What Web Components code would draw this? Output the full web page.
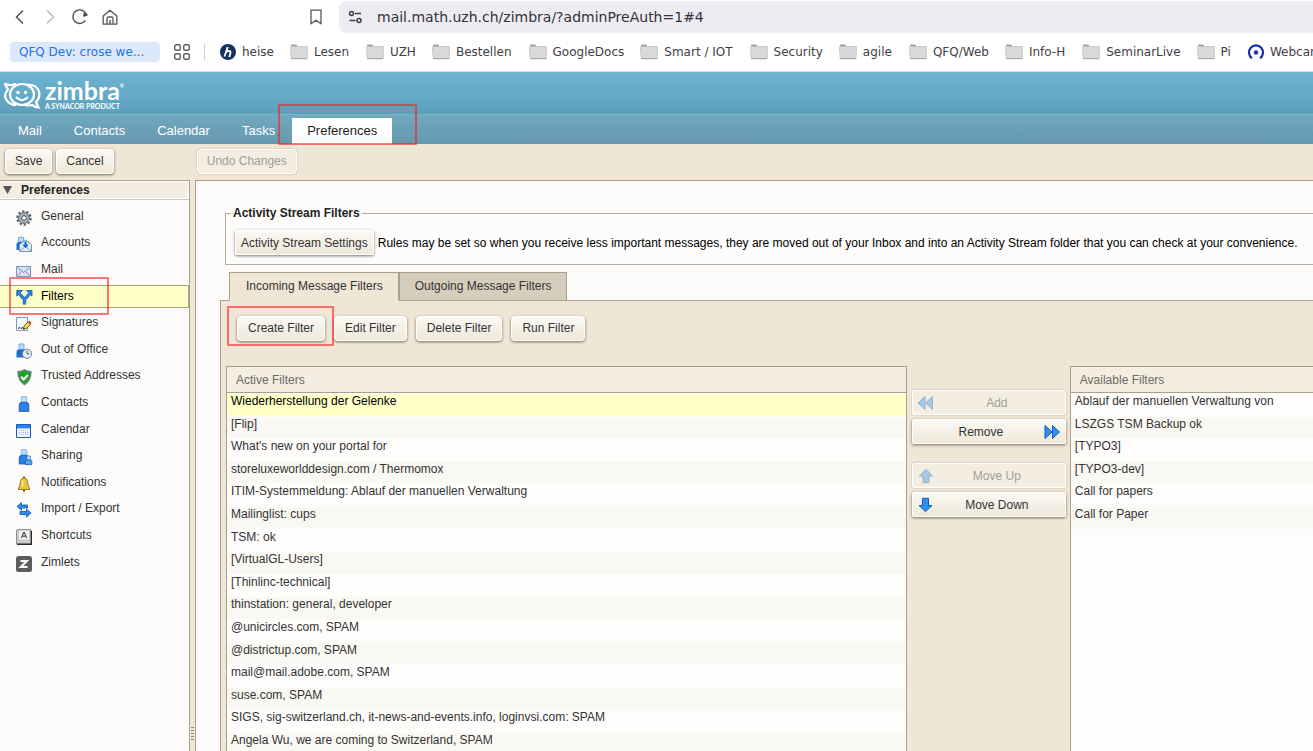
<!DOCTYPE html>
<html lang="en">
<head>
<meta charset="utf-8">
<title>Zimbra: Preferences</title>
<style>
  html, body { margin: 0; height: 100%; overflow: hidden; }
  body { font: 12px/16px "Liberation Sans", Arial, sans-serif; color: #333; background: #efe6d5; }
</style>
</head>
<body>
<zm-window></zm-window>

<script>
const ICONS = {
  general: `<g fill="none" stroke="#5d6770"><circle cx="8" cy="8" r="6.6" stroke-width="2.4" stroke-dasharray="2.3 1.85"/></g><circle cx="8" cy="8" r="5.4" fill="#a9b3bb" stroke="#5d6770"/><circle cx="8" cy="8" r="2.3" fill="#fdfcfa" stroke="#454d54"/>`,
  accounts: `<path d="M2.500 1.500Q5 .3 7.500 1.500V6H2.500z" fill="#b9dcf8" stroke="#5b9bd5" stroke-width=".8"/><path d="M.5 14V8.500Q.5 6 3 6H6v8z" fill="#1c6fd0"/><path d="M3.500 8.500 9.500 4 15.500 8.500v7h-12z" fill="#e3edf8" stroke="#7593b5"/><path d="M4 15l4-3.500M15 15l-4-3.500" stroke="#7593b5"/><path d="M9.500 5.500v4" stroke="#1463c4" stroke-width="2"/><path d="M6.300 8.800h6.400L9.500 12.300z" fill="#1463c4"/>`,
  mail: `<path d="M.5 3.500h14v10H.5z" fill="#d5e3f3" stroke="#7a96b8"/><path d="M1.500 4.500l6 5 6-5M1.500 12.500l4-4M13.500 12.500l-4-4" fill="none" stroke="#7a96b8"/>`,
  filters: `<path d="M8.500 15.500V10.500L4 5.500M8.500 10.500 13 5.500" fill="none" stroke="#0d4fae" stroke-width="3.200"/><path d="M.8 1.500h5.700L.8 7.200zM16 1.500H10.500L16 7.200z" fill="#2b87ea" stroke="#0d4fae" stroke-width=".8"/><path d="M8.500 15V10.500L3.500 4.500M8.500 10.500l5-6" fill="none" stroke="#2b87ea" stroke-width="2"/>`,
  signatures: `<path d="M.5 1.500h11v13H.5z" fill="#f3f8fd" stroke="#7f9db9"/><path d="M2 12.500l2-1 1 1 2-1" fill="none" stroke="#222"/><path d="M8 10l4-4 2.500 2.500-4 4-3.200.8z" fill="#f6d431" stroke="#5b4a10" stroke-width=".8"/><path d="M12 6l1.400-1.200 2.200 2.200-1.100 1.500z" fill="#d83b2b"/><path d="M7.300 13.300l.4-1.700 1.300 1.300z" fill="#111"/>`,
  office: `<path d="M3 1.200Q5.500.3 8 1.200V6.500H3z" fill="#b9dcf8" stroke="#5b9bd5" stroke-width=".8"/><path d="M.5 14.500V9Q.5 6.500 3 6.500h8v8z" fill="#1c6fd0"/><circle cx="11" cy="10.800" r="4.600" fill="#e4eef8" stroke="#7b8894"/><path d="M11 7.800v3h2.500" fill="none" stroke="#4a5560"/>`,
  trusted: `<path d="M8.500.8Q11.500 2.600 15 2.600 15 11.500 8.500 15.600 2 11.500 2 2.600 5.500 2.600 8.500.8z" fill="#19a51e" stroke="#72808a" stroke-width="1.400"/><path d="M5.200 7.800l2.500 2.700 4.200-4.500" fill="none" stroke="#fff" stroke-width="2"/>`,
  contacts: `<path d="M5.200.8Q8 0 10.800.8V6.300H5.200z" fill="#b9dcf8" stroke="#7db2e2" stroke-width=".8"/><path d="M3.200 15.400V9Q3.200 6.300 6 6.300h4q2.800 0 2.800 2.700v6.400z" fill="#2b80e4" stroke="#0f55b4" stroke-width=".8"/>`,
  calendar: `<path d="M.5 1.500h14v13H.5z" fill="#f2f4f7" stroke="#1a5cb8"/><path d="M1 2h13v3.400H1z" fill="#2a86ec"/><path d="M3 7.500h10M3 9.500h10M3 11.500h10" stroke="#b7bcc4" stroke-dasharray="1 1"/>`,
  sharing: `<path d="M5.200.8Q8 0 10.800.8V6.300H5.200z" fill="#b9dcf8" stroke="#7db2e2" stroke-width=".8"/><path d="M3.200 15V9Q3.200 6.300 6 6.300h4q2.800 0 2.800 2.700v6z" fill="#2b80e4" stroke="#0f55b4" stroke-width=".8"/><path d="M11 7h3.400v4H11z" fill="#c5e2fa" stroke="#3f82c8" stroke-width=".8"/><path d="M9.400 15.600v-3.100q0-1.500 1.600-1.500h3.200q1.600 0 1.600 1.500v3.100z" fill="#58a2f2" stroke="#1858b0" stroke-width=".8"/>`,
  notifications: `<path d="M8 .5v2M8 13.500v2.300" stroke="#54401b" stroke-width="1.600"/><path d="M8 2Q4.600 2 4.300 6.500 4.100 10.500 2.500 12v1.500h11V12Q11.900 10.500 11.700 6.500 11.400 2 8 2z" fill="#f0c43a" stroke="#8a6a1b" stroke-width=".9"/><path d="M6.400 4.500v6" stroke="#fceeb0" stroke-width="1.600"/>`,
  transfer: `<path d="M1 4.500 5.500.7V3h6v3h-6v2.300z" fill="#2f8cee" stroke="#0d4fae" stroke-width=".8"/><path d="M15 11l-4.500-3.800v2.300H4v3h6.500v2.600z" fill="#2f8cee" stroke="#0d4fae" stroke-width=".8"/>`,
  shortcuts: `<rect x=".5" y=".5" width="15" height="15" rx="1.500" fill="#c9cacb" stroke="#8d8f91"/><path d="M15.300 2v13.300H1" fill="none" stroke="#2a2a2a" stroke-width="1.400"/><path d="M3 1.500h10v9H3z" fill="#f1f1f1"/><path d="M5.300 9 8 3l2.700 6M6.200 7.200h3.600" fill="none" stroke="#333"/>`,
  zimlets: `<rect width="16" height="16" rx="2.500" fill="#5c5d5f"/><path d="M4.500 5h6.200L5 11h6.500" fill="none" stroke="#fff" stroke-width="2.200"/>`,
  left: `<path d="M7 1.500v13L0 8zM14.500 1.500v13L7.500 8z" fill="#2f90ee" stroke="#0d5bbd"/>`,
  right: `<path d="M1 1.500v13L8 8zM8.500 1.500v13l7-6.500z" fill="#2f90ee" stroke="#0d5bbd"/>`,
  up: `<path d="M8 1.300 14.500 8H11v6.700H5V8H1.500z" fill="#2f90ee" stroke="#0d5bbd"/>`,
  down: `<path d="M7.500 14.700 1 8.500h3.500V1.300h6v7.200H14z" fill="#2f90ee" stroke="#0d5bbd"/>`,
  back: `<path d="M11 1.500 4.500 8l6.500 6.500" fill="none" stroke="#4a4a50" stroke-width="1.400"/>`,
  forward: `<path d="M5 1.500 11.500 8 5 14.500" fill="none" stroke="#b9b9be" stroke-width="1.400"/>`,
  reload: `<path d="M13.400 11.400A6.800 6.800 0 1 1 14.300 6" fill="none" stroke="#4a4a50" stroke-width="1.400"/><path d="M11 5.800a2.300 2.300 0 1 1 4.600.8L11.500 8z" fill="#4a4a50"/>`,
  home: `<path d="M1.200 7 8 1.200 14.800 7v8.100H1.200zM5 15V9.500q0-1.500 1.500-1.500h3Q11 8 11 9.500V15M8 11v4" fill="none" stroke="#55555b" stroke-width="1.300" stroke-linejoin="round"/>`,
  save: `<path d="M3 1.200h10v13.600L8 11.200l-5 3.600z" fill="none" stroke="#55555b" stroke-width="1.300" stroke-linejoin="round"/>`,
  site: `<g fill="none" stroke="#3c3c42" stroke-width="1.500"><circle cx="4.500" cy="4.500" r="2"/><path d="M8 4.500h6M2.500 11.500h6"/><circle cx="12" cy="11.500" r="2"/></g>`,
  apps: `<g fill="none" stroke="#5b5b62" stroke-width="1.400"><rect x=".7" y=".7" width="5.600" height="5.600" rx="1.500"/><rect x="9.700" y=".7" width="5.600" height="5.600" rx="1.500"/><rect x=".7" y="9.700" width="5.600" height="5.600" rx="1.500"/><rect x="9.700" y="9.700" width="5.600" height="5.600" rx="1.500"/></g>`,
  heise: `<circle cx="8" cy="8" r="8" fill="#15325f"/><path d="M7.800 3 4.500 12.500M6.800 7.600Q11.500 5.500 10.300 9.500L9.300 13" fill="none" stroke="#fff" stroke-width="1.900"/>`,
  folder: `<path d="M1.200.5h5l1 1.500v2h-6z" fill="#9d9d9d"/><path d="M.8 2.500H17q.5 0 .5.500l-.4 11.500H1.200L.4 3z" fill="#d9d9d9" stroke="#c0c0c0" stroke-width=".8"/><path d="M1.200 14.700h16" stroke="#a0a0a0"/>`,
  webcam: `<path d="M4 14.200A7 7 0 1 1 12 14.200" fill="none" stroke="#1c33a8" stroke-width="2.300"/><circle cx="8" cy="8.500" r="2.200" fill="#1c33a8"/>`
};

function define(name, html, setup) {
  const template = document.createElement("template");
  template.innerHTML = html;
  customElements.define(name, class extends HTMLElement {
    constructor() {
      super();
      this.attachShadow({ mode: "open" }).append(template.content.cloneNode(true));
    }
    connectedCallback() { if (setup) setup(this, this.shadowRoot); }
  });
}

define("zm-icon", `
  <style>
    :host { display: block; flex: none; width: 16px; height: 16px; }
    svg { display: block; width: 100%; height: 100%; overflow: visible; }
  </style>
  <svg viewBox="0 0 16 16" aria-hidden="true"></svg>`,
  (el, root) => { root.querySelector("svg").innerHTML = ICONS[el.getAttribute("name")]; });

/* Outline drawn round a control to point it out; its user sets how far it reaches. */
define("zm-callout", `
  <style>
    :host { display: block; position: absolute; z-index: 2; box-sizing: border-box; pointer-events: none;
            border: 2px solid rgba(250, 30, 30, .6); border-radius: 1px; }
  </style>`);

define("zm-button", `
  <style>
    :host { display: block; }
    button { box-sizing: border-box; width: 100%; height: 25px; display: flex; align-items: center; padding: 0 var(--pad, 9px) 2px;
             font: inherit; color: #333; white-space: nowrap; border: 1px solid #fff; border-radius: 4px;
             background: linear-gradient(#fbf9f5, #efe8d9); box-shadow: 0 1px 3px rgba(0, 0, 0, .55); }
    button:disabled { color: #a19e98; background: #f4eee2; box-shadow: 0 0 2px rgba(0, 0, 0, .25); }
    button:disabled ::slotted(zm-icon) { opacity: .4; }
    span { flex: 1; text-align: center; }
    :host([square]) button { border-radius: 2px; padding: 0 5px; }
  </style>
  <button type="button"><slot name="before"></slot><span><slot></slot></span><slot name="after"></slot></button>`,
  (el, root) => { root.querySelector("button").disabled = el.hasAttribute("disabled"); });

define("browser-bar", `
  <style>
    :host { display: flex; align-items: center; height: 34px; background: #fff; padding-left: 12px; }
    nav { display: flex; gap: 14px; flex: none; }
    button { border: 0; padding: 0; background: none; }
    .mark { margin-left: 190px; flex: none; }
    .address { flex: 1; min-width: 0; display: flex; align-items: center; gap: 14px; box-sizing: border-box; height: 32px;
               margin-left: 15px; padding-left: 8px; background: #edecf2; border-radius: 8px 0 0 8px; }
    input { flex: 1; min-width: 0; border: 0; padding: 0; background: none; color: #33333a;
            font: 14px/20px "DejaVu Sans", sans-serif; outline: 0; }
  </style>
  <nav>
    <button aria-label="Back"><zm-icon name="back"></zm-icon></button>
    <button aria-label="Forward"><zm-icon name="forward"></zm-icon></button>
    <button aria-label="Reload"><zm-icon name="reload"></zm-icon></button>
    <button aria-label="Home"><zm-icon name="home"></zm-icon></button>
  </nav>
  <button class="mark" aria-label="Bookmark"><zm-icon name="save"></zm-icon></button>
  <div class="address"><zm-icon name="site"></zm-icon>
    <input type="text" aria-label="Address" value="mail.math.uzh.ch/zimbra/?adminPreAuth=1#4"></div>`);

define("bookmark-link", `
  <style>
    :host { display: block; flex: none; }
    a { display: flex; align-items: center; gap: 6px; color: #3f4045; text-decoration: none; white-space: nowrap; }
    :host([wide]) zm-icon { margin-right: 2px; }
  </style>
  <a href="#"><zm-icon></zm-icon><slot></slot></a>`,
  (el, root) => {
    const icon = root.querySelector("zm-icon");
    icon.setAttribute("name", el.getAttribute("icon"));
    icon.connectedCallback();
  });

define("bookmark-bar", `
  <style>
    :host { display: flex; align-items: center; gap: 17px; box-sizing: border-box; height: 38px; padding: 0 0 2px 10px;
            overflow: hidden; background: #fff; border-bottom: 1px solid #dcdde3; font: 12px/20px "DejaVu Sans", sans-serif; }
    .first { flex: none; box-sizing: border-box; width: 150px; padding: 0 9px; color: #2272e8; background: #dce9fc;
             border-radius: 4px; text-decoration: none; white-space: nowrap; }
    .apps { margin: 0 -3px; }
    hr { flex: none; width: 1px; height: 16px; border: 0; margin: 0 -2px 0 0; background: #cfcfd6; }
    bookmark-link:nth-of-type(even) { margin-left: -1px; }
  </style>
  <a class="first" href="#">QFQ Dev: crose we...</a>
  <zm-icon class="apps" name="apps"></zm-icon><hr>
  <bookmark-link icon="heise">heise</bookmark-link>
  <bookmark-link wide icon="folder">Lesen</bookmark-link>
  <bookmark-link wide icon="folder">UZH</bookmark-link>
  <bookmark-link wide icon="folder">Bestellen</bookmark-link>
  <bookmark-link wide icon="folder">GoogleDocs</bookmark-link>
  <bookmark-link wide icon="folder">Smart / IOT</bookmark-link>
  <bookmark-link wide icon="folder">Security</bookmark-link>
  <bookmark-link wide icon="folder">agile</bookmark-link>
  <bookmark-link wide icon="folder">QFQ/Web</bookmark-link>
  <bookmark-link wide icon="folder">Info-H</bookmark-link>
  <bookmark-link wide icon="folder">SeminarLive</bookmark-link>
  <bookmark-link wide icon="folder">Pi</bookmark-link>
  <bookmark-link icon="webcam">Webcam</bookmark-link>`);

define("zm-logo", `
  <style>
    :host { display: flex; align-items: center; gap: 4px; color: #fff; font-family: Lato, sans-serif; }
    svg { display: block; width: 38px; height: 28px; }
    b { display: block; font-size: 25px; line-height: 22px; font-weight: 700; }
    sup { font-size: 5px; line-height: 5px; vertical-align: 12px; }
    small { display: block; font-size: 7px; line-height: 8px; font-weight: 700; white-space: nowrap; margin-top: 1px; }
  </style>
  <svg viewBox="0 0 38 28" fill="none" stroke="#fff" aria-hidden="true">
    <path d="M1.500 2.500 5 8.500Q0 14 3.500 19 7 24 13 24M1.500 2.500Q5 4.500 9 4q2-.8 4-.8" stroke-width="2.200"/>
    <path d="M24 3.500q10 0 12 7 1.500 6-3 10.500l2.500 5.500Q31 26 29.500 24 26 25 22 24" stroke-width="2.200"/>
    <ellipse cx="19" cy="13.500" rx="12" ry="10.500" stroke-width="2.200"/>
    <path d="M13 16q6 6.500 12 0" stroke-width="2"/>
    <circle cx="15" cy="11.500" r="1.700" fill="#fff" stroke="none"/><circle cx="22.500" cy="11.500" r="1.700" fill="#fff" stroke="none"/>
  </svg>
  <div><b>zimbra<sup>®</sup></b><small>A SYNACOR PRODUCT</small></div>`);

define("app-header", `
  <style>
    :host { display: block; }
    .brand { display: flex; align-items: center; height: 42px; padding: 3px 3px 0; box-sizing: border-box;
             background: linear-gradient(#6db5d3, #5d9fbb); }
    nav { display: flex; align-items: flex-end; gap: 2px; height: 29px; padding: 0 3px; border-top: 1px solid #7fb3c6;
          background: linear-gradient(#6fa8bf, #6699b0); font-size: 13px; }
    a { position: relative; line-height: 26px; padding: 0 15px; color: #fff; text-decoration: none; }
    a[aria-current] { color: #222; background: #fff; }
    zm-callout { inset: -14px -25px -1px -14px; }
  </style>
  <div class="brand"><zm-logo></zm-logo></div>
  <nav>
    <a href="#">Mail</a><a href="#">Contacts</a><a href="#">Calendar</a><a href="#">Tasks</a>
    <a href="#" aria-current="page">Preferences<zm-callout></zm-callout></a>
  </nav>`);

define("nav-item", `
  <style>
    :host { display: flex; align-items: center; }
    a { position: relative; box-sizing: border-box; width: 100%; height: 23px; display: flex; align-items: center; gap: 9px;
        padding: 0 16px; color: #333; text-decoration: none; border: solid transparent; border-width: 1px 1px 1px 0; line-height: 20px; }
    zm-icon { align-self: flex-end; margin-bottom: 1px; }
    span { margin-bottom: 1px; }
    :host([selected]) a { color: #000; background: #ffffc8; border-color: #a5a272; }
    :host([selected]) zm-icon { margin-bottom: 2px; }
  </style>
  <a href="#"><zm-icon></zm-icon><span><slot></slot></span><slot name="callout"></slot></a>`,
  (el, root) => {
    const icon = root.querySelector("zm-icon");
    icon.setAttribute("name", el.getAttribute("icon"));
    icon.connectedCallback();
  });

define("prefs-sidebar", `
  <style>
    :host { display: block; background: #fdfcfa; border: solid #a7a08f; border-width: 1px 1px 0 0; }
    h2 { display: flex; align-items: center; gap: 9px; margin: 0; height: 16px; padding-left: 3px; font-size: 12px; color: #222;
         background: #f3ede2; border: 1px solid #fff; border-left: 0; box-shadow: 0 1px #cfcac0; }
    svg { width: 9px; height: 8px; }
    nav { position: relative; display: grid; grid-auto-rows: 1fr; height: calc(14 * 133px / 5); margin-top: 4px; }
    zm-callout { inset: -9px 79px -8px 9px; }
  </style>
  <h2><svg viewBox="0 0 9 8" aria-hidden="true"><path d="M0 0h9L4.500 8z" fill="#555"/></svg>Preferences</h2>
  <nav>
    <nav-item icon="general">General</nav-item>
    <nav-item icon="accounts">Accounts</nav-item>
    <nav-item icon="mail">Mail</nav-item>
    <nav-item icon="filters" selected>Filters<zm-callout slot="callout"></zm-callout></nav-item>
    <nav-item icon="signatures">Signatures</nav-item>
    <nav-item icon="office">Out of Office</nav-item>
    <nav-item icon="trusted">Trusted Addresses</nav-item>
    <nav-item icon="contacts">Contacts</nav-item>
    <nav-item icon="calendar">Calendar</nav-item>
    <nav-item icon="sharing">Sharing</nav-item>
    <nav-item icon="notifications">Notifications</nav-item>
    <nav-item icon="transfer">Import / Export</nav-item>
    <nav-item icon="shortcuts">Shortcuts</nav-item>
    <nav-item icon="zimlets">Zimlets</nav-item>
  </nav>`);

define("filter-row", `
  <style>
    :host { display: block; min-height: 0; padding-left: 4px; line-height: 14px; white-space: nowrap; overflow: hidden;
            border-top: 1px solid #fffefc; box-sizing: border-box; background: #fefdfb; }
    :host(:nth-child(even)) { background: #faf8f3; }
    :host([selected]) { background: #ffffc8; color: #000; }
  </style>
  <slot></slot>`,
  el => el.setAttribute("role", "option"));

define("filter-list", `
  <style>
    :host { display: flex; flex-direction: column; background: #fefdfb; border: solid #a7a08f; border-width: 1px 1px 0; min-width: 0; }
    h3 { margin: 0; padding-left: 9px; height: 25px; font-size: 12px; font-weight: 400; line-height: 26px; color: #6d6a64;
         background: #f3ede2; border-bottom: 1px solid #a7a08f; }
    div { display: grid; grid-auto-rows: 1fr; flex: none; height: calc(var(--rows) * 113px / 5); }
    :host([open-end]) { border-right: 0; }
  </style>
  <h3></h3><div role="listbox"><slot></slot></div>`,
  (el, root) => {
    root.querySelector("h3").textContent = el.getAttribute("heading");
    root.querySelector("div").style.setProperty("--rows", el.getAttribute("rows"));
  });

define("activity-stream", `
  <style>
    :host { display: block; }
    fieldset { margin: 0; min-width: 0; border: 1px solid #b3ada0; border-right: 0; padding: 8px 0 9px 5px; }
    legend { padding: 0 2px; font-weight: 700; line-height: 14px; color: #222; }
    div { display: flex; align-items: center; gap: 4px; margin: 2px 0 0 4px; white-space: nowrap; color: #000; }
    zm-button { flex: none; }
  </style>
  <fieldset><legend>Activity Stream Filters</legend>
    <div><zm-button square>Activity Stream Settings</zm-button><span>Rules may be set so when you receive less important messages, they are moved out of your Inbox and into an Activity Stream folder that you can check at your convenience.</span></div>
  </fieldset>`);

define("filter-panel", `
  <style>
    :host { display: flex; flex-direction: column; min-height: 0; }
    .tabs { display: flex; padding-left: 9px; margin-bottom: -1px; z-index: 1; }
    .tabs button { font: inherit; color: #333; height: 29px; padding: 0 15px 2px; background: #d6cebc; border: 1px solid #a7a08f; }
    .tabs button:first-child { padding-left: 16px; }
    .tabs [aria-selected="true"] { background: #efe6d5; border-bottom-color: #efe6d5; }
    .panel { flex: 1; min-height: 0; background: #efe6d5; border: solid #a7a08f; border-width: 1px 0 0 1px; padding-left: 5px;
             display: flex; flex-direction: column; }
    .actions { position: relative; display: flex; gap: 9px; padding: 15px 0 25px 11px; --pad: 10px; }
    zm-callout { left: 1px; top: 5px; width: 107px; height: 40px; }
    .lists { flex: 1; min-height: 0; display: grid; grid-template-columns: minmax(0, 14fr) 163px minmax(0, 5fr); }
    .moves { display: flex; flex-direction: column; gap: 4px; padding: 24px 4px 0 5px; }
    .gap { margin-top: 15px; }
  </style>
  <div class="tabs" role="tablist">
    <button role="tab" aria-selected="true">Incoming Message Filters</button>
    <button role="tab" aria-selected="false">Outgoing Message Filters</button>
  </div>
  <div class="panel">
    <div class="actions">
      <zm-button>Create Filter</zm-button><zm-button>Edit Filter</zm-button>
      <zm-button>Delete Filter</zm-button><zm-button>Run Filter</zm-button>
      <zm-callout></zm-callout>
    </div>
    <div class="lists">
      <filter-list heading="Active Filters" rows="16">
        <filter-row selected>Wiederherstellung der Gelenke</filter-row>
        <filter-row>[Flip]</filter-row>
        <filter-row>What's new on your portal for</filter-row>
        <filter-row>storeluxeworlddesign.com / Thermomox</filter-row>
        <filter-row>ITIM-Systemmeldung: Ablauf der manuellen Verwaltung</filter-row>
        <filter-row>Mailinglist: cups</filter-row>
        <filter-row>TSM: ok</filter-row>
        <filter-row>[VirtualGL-Users]</filter-row>
        <filter-row>[Thinlinc-technical]</filter-row>
        <filter-row>thinstation: general, developer</filter-row>
        <filter-row>@unicircles.com, SPAM</filter-row>
        <filter-row>@districtup.com, SPAM</filter-row>
        <filter-row>mail@mail.adobe.com, SPAM</filter-row>
        <filter-row>suse.com, SPAM</filter-row>
        <filter-row>SIGS, sig-switzerland.ch, it-news-and-events.info, loginvsi.com: SPAM</filter-row>
        <filter-row>Angela Wu, we are coming to Switzerland, SPAM</filter-row>
      </filter-list>
      <div class="moves">
        <zm-button square disabled><zm-icon slot="before" name="left"></zm-icon>Add</zm-button>
        <zm-button square>Remove<zm-icon slot="after" name="right"></zm-icon></zm-button>
        <zm-button square disabled class="gap"><zm-icon slot="before" name="up"></zm-icon>Move Up</zm-button>
        <zm-button square><zm-icon slot="before" name="down"></zm-icon>Move Down</zm-button>
      </div>
      <filter-list open-end heading="Available Filters" rows="6">
        <filter-row>Ablauf der manuellen Verwaltung von</filter-row>
        <filter-row>LSZGS TSM Backup ok</filter-row>
        <filter-row>[TYPO3]</filter-row>
        <filter-row>[TYPO3-dev]</filter-row>
        <filter-row>Call for papers</filter-row>
        <filter-row>Call for Paper</filter-row>
      </filter-list>
    </div>
  </div>`);

define("zm-window", `
  <style>
    :host { display: flex; flex-direction: column; height: 100vh; overflow: hidden; }
    browser-bar, bookmark-bar, app-header, .toolbar { flex: none; }
    .toolbar { display: flex; gap: 4px; height: 31px; padding: 5px 0 0 5px; }
    .undo { margin-left: 79px; }
    .body { flex: 1; min-height: 0; display: grid; grid-template-columns: 190px 5px minmax(0, 1fr); }
    .sash { display: flex; align-items: flex-end; justify-content: center; padding-bottom: 10px; }
    .sash i { width: 3px; height: 14px; background: repeating-linear-gradient(#8f897a 0 1px, transparent 1px 3px); }
    main { min-width: 0; min-height: 0; display: flex; flex-direction: column; background: #fdfcfa; border: solid #a7a08f;
           border-width: 1px 0 0 1px; padding: 25px 0 0 24px; }
    activity-stream { margin-left: 5px; }
    filter-panel { flex: 1; margin-top: 7px; }
  </style>
  <browser-bar></browser-bar>
  <bookmark-bar></bookmark-bar>
  <app-header></app-header>
  <div class="toolbar">
    <zm-button>Save</zm-button><zm-button>Cancel</zm-button><zm-button class="undo" disabled>Undo Changes</zm-button>
  </div>
  <div class="body">
    <prefs-sidebar></prefs-sidebar>
    <div class="sash"><i></i></div>
    <main><activity-stream></activity-stream><filter-panel></filter-panel></main>
  </div>`);
</script>
</body>
</html>
